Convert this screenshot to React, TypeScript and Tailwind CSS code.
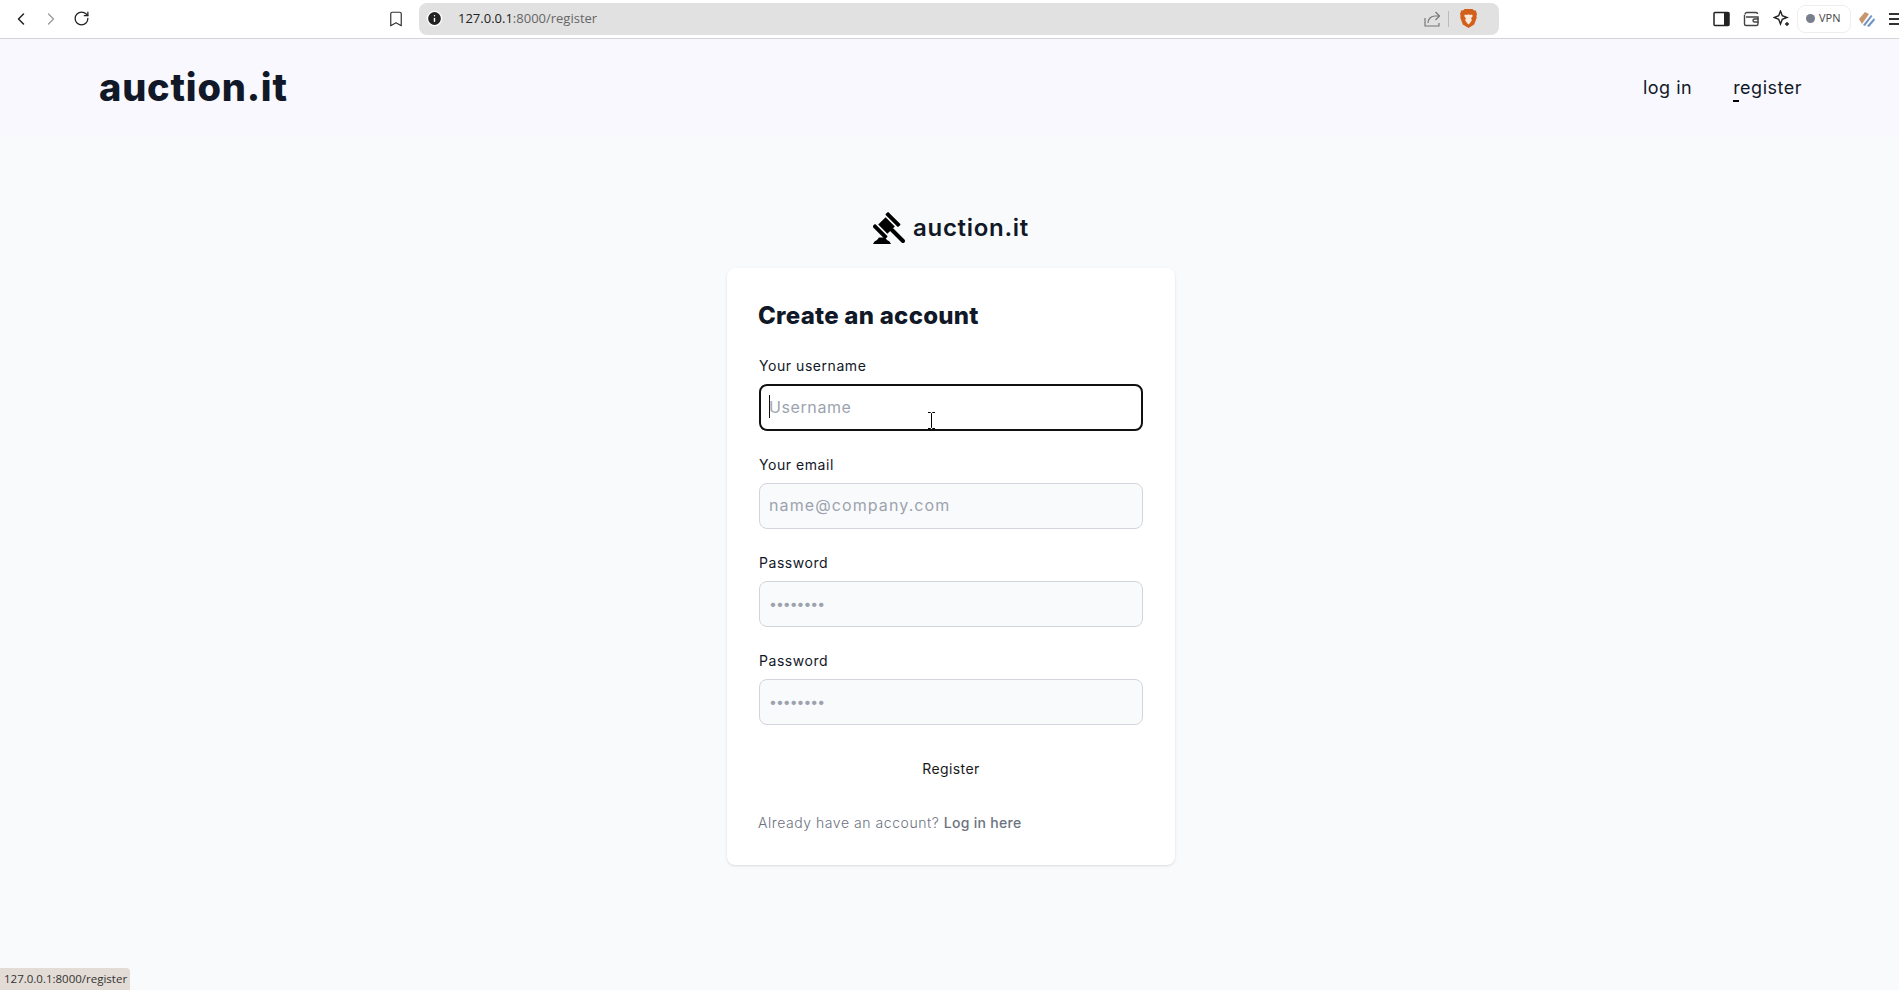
import React from 'react';
import { ChevronLeft, ChevronRight, RotateCw, Bookmark, Info } from 'lucide-react';

const BraveLion = () => (
  <svg width="17" height="19" viewBox="0 0 17 19" className="shrink-0">
    <path d="M4.5 0h8l1.5 1.6 1.6-.3L17 5l-.6 2 .4 1.5-2.6 7L8.5 19l-5.700-3.500L.2 8.500.6 7 0 5l1.400-3.700 1.600.3z" fill="#d2601a" />
    <path d="M5 5.500l2 .5 1.500-.8 1.500.8 2-.5.800 1.500-1.800 2.500 1 1.500-2 3-1.500 1.500-1.500-1.500-2-3 1-1.500L4.200 7z" fill="#f8e8da" />
  </svg>
);

const Gavel = () => (
  <svg width="32" height="32" viewBox="0 0 32 32" className="mr-2 shrink-0">
    <rect x="11" y="5.500" width="18" height="4" rx="1" transform="rotate(45 20 7.500)" fill="#000" />
    <rect x="-2" y="17.500" width="18" height="4" rx="1" transform="rotate(45 7 19.500)" fill="#000" />
    <rect x="7" y="8.250" width="13" height="10.500" transform="rotate(45 13.500 13.500)" fill="#000" />
    <path d="M19 18 L30 29" stroke="#000" strokeWidth="4" strokeLinecap="round" />
    <path d="M0 32 Q1 29 4 28 L6 25.500 H12 L14 28 Q17 29 18 32 Z" fill="#000" />
  </svg>
);

const Field = ({ label, type, placeholder, focused }: { label: string; type: string; placeholder: string; focused?: boolean }) => {
  let inputClass = 'block w-full h-[46px] pl-[9px] pr-2.5 pb-[2px] rounded-lg bg-[#f9fafb] border border-[#d1d5db] text-base tracking-[1.1px] placeholder:text-[#9ca3af] outline-none';
  if (focused) {
    inputClass = 'block w-full h-[47px] pl-[8px] pr-2.5 pb-[2px] rounded-lg bg-white border-2 border-[#111] text-base tracking-[0.6px] placeholder:text-[#9ca3af] outline-none';
  } else if (type === 'password') {
    inputClass = 'block w-full h-[46px] pl-[9px] pr-2.5 pb-[2px] rounded-lg bg-[#f9fafb] border border-[#d1d5db] text-sm tracking-[-1px] placeholder:text-[#9ca3af] outline-none';
  }
  return (
    <div>
      <label className="block mb-2 text-sm tracking-[0.55px] text-[#111827]">{label}</label>
      <div className="relative">
        <input type={type} placeholder={placeholder} readOnly className={inputClass} />
        {focused && <div className="absolute left-[10px] top-[11px] w-px h-[23px] bg-[#111]" />}
      </div>
    </div>
  );
};

const App: React.FC = () => {
  return (
    <div className="relative min-h-screen bg-[#f9fafb] font-['Inter',sans-serif] overflow-hidden">
      {/* Browser toolbar */}
      <div className="flex items-center h-[39px] bg-white border-b border-[#d4d4d4] pb-px overflow-hidden">
        <div className="flex items-center gap-[10px] pl-[11px] w-[387px] shrink-0">
          <ChevronLeft className="w-[20px] h-[20px] text-[#222]" strokeWidth={1.8} />
          <ChevronRight className="w-[20px] h-[20px] text-[#999]" strokeWidth={1.5} />
          <RotateCw className="w-[17px] h-[17px] ml-[2px] text-[#222]" strokeWidth={1.8} />
        </div>
        <Bookmark className="w-[18px] h-[20px] shrink-0 text-[#333]" strokeWidth={1.6} />
        <div className="flex items-center ml-[14px] w-[1080px] shrink-0 h-[32px] rounded-lg bg-[#e1e1e1] pl-[7px] pr-[22px]">
          <Info className="w-[17px] h-[17px] text-white fill-[#222]" strokeWidth={2} />
          <span className="ml-[15px] text-[13px] font-['Open_Sans',sans-serif] text-[#222]">127.0.0.1<span className="text-[#666]">:8000/register</span></span>
          <svg width="17" height="16" viewBox="0 0 17 16" fill="none" stroke="#777" strokeWidth="1.2" className="ml-auto shrink-0">
            <path d="M1 7v8h14v-3" />
            <path d="M4 12c0-4 3-7 7-7h4M11.500 1l4 4-4 4" />
          </svg>
          <div className="w-px h-[16px] bg-[#bbb] ml-[7px] mr-[11px]" />
          <BraveLion />
        </div>
        <div className="flex items-center ml-[214px] shrink-0">
          <svg width="17" height="16" viewBox="0 0 17 16" className="shrink-0">
            <rect x="1" y="1.500" width="15" height="13" rx="1" fill="#fff" stroke="#222" strokeWidth="1.500" />
            <rect x="11" y="1.500" width="5" height="13" fill="#222" />
          </svg>
          <svg width="17" height="16" viewBox="0 0 17 16" fill="none" stroke="#444" strokeWidth="1.400" className="ml-[13px] shrink-0">
            <path d="M2 3.500C2 2 3 1.500 4 1.500h9c1 0 1.500.5 1.500 1.500M1.500 4v9c0 1 .5 1.500 1.500 1.500h10.500c1 0 1.500-.5 1.500-1.500V6H3" />
            <path d="M15.500 8h-4a1.500 1.500 0 0 0 0 3h4" />
          </svg>
          <svg width="17" height="17" viewBox="0 0 17 17" fill="none" stroke="#222" strokeWidth="1.400" className="ml-[13px] shrink-0">
            <path d="M7.500 1l1.800 4.700L14 7.500l-4.700 1.800L7.500 14 5.700 9.300 1 7.500l4.700-1.800z" />
            <path d="M14 12v4M12 14h4" />
          </svg>
          <div className="ml-[7px] flex items-center w-[54px] h-[28px] shrink-0 rounded-lg border border-[#eee] pl-[8px]">
            <span className="w-[9px] h-[9px] rounded-full bg-[#777f8c]" />
            <span className="ml-[4px] text-[11px] font-['Open_Sans',sans-serif] text-[#444]">VPN</span>
          </div>
          <svg width="16" height="16" viewBox="0 0 16 16" className="ml-[8px] shrink-0">
            <path d="M0 8 L6 1 L10 3 L3 13Z" fill="#c9966b" />
            <path d="M4 14 L12 4 L13.500 5 L6 15Z" fill="#6f94c4" />
            <path d="M8 15 L15 7 L16 9 L10 16Z" fill="#6f94c4" />
          </svg>
          <div className="ml-[14px] flex flex-col gap-[3px] w-[16px] shrink-0">
            <span className="h-[2px] bg-[#333]" />
            <span className="h-[2px] bg-[#333]" />
            <span className="h-[2px] bg-[#333]" />
          </div>
        </div>
      </div>

      {/* Site header */}
      <header className="flex items-center justify-between h-[97px] pl-[99px] pr-[97px] bg-[#f8f8fe]">
        <a className="text-[38px] font-extrabold tracking-[0.8px] text-[#111827]">auction.it</a>
        <nav className="flex items-center gap-[41px] text-lg tracking-[0.5px] text-[#111827]">
          <a>log in</a>
          <a className="relative">
            register
            <span className="absolute left-0 top-[26px] w-[6px] h-[2px] bg-black" />
          </a>
        </nav>
      </header>

      {/* Register form */}
      <main className="flex flex-col items-center pt-[76px] pl-[3px]">
        <div className="flex items-center mb-6 text-2xl font-semibold tracking-[0.7px] text-[#111827]">
          <Gavel />
          auction.it
        </div>
        <div className="w-[448px] p-8 bg-white rounded-lg shadow">
          <h1 className="text-2xl font-extrabold tracking-[0.25px] -ml-px text-[#111827] mb-6">Create an account</h1>
          <form className="flex flex-col gap-6">
            <Field label="Your username" type="text" placeholder="Username" focused />
            <Field label="Your email" type="email" placeholder="name@company.com" />
            <Field label="Password" type="password" placeholder="••••••••" />
            <Field label="Password" type="password" placeholder="••••••••" />
            <button type="button" className="h-10 text-sm tracking-[0.4px] text-[#1a1a1a]">Register</button>
            <p className="-ml-px text-sm font-light tracking-[0.55px] text-[#6b7280]">
              Already have an account? <a className="font-medium tracking-[0.3px]">Log in here</a>
            </p>
          </form>
        </div>
      </main>

      {/* Mouse cursor over the focused input */}
      <svg width="9" height="17" viewBox="0 0 9 17" className="absolute left-[927px] top-[412px]">
        <path d="M1 .5h2.500L4.500 1.500 5.500.5H8M4.500 1.500v14M1 16.500h2.500l1-1 1 1H8" fill="none" stroke="#000" strokeWidth="1" />
      </svg>

      {/* Browser status bubble */}
      <div className="absolute left-0 bottom-0 flex items-center w-[130px] h-[22px] pl-[4px] bg-[#e3dcd6] rounded-tr-[4px] text-[11.5px] font-['Open_Sans',sans-serif] text-[#333]">
        127.0.0.1:8000/register
      </div>
    </div>
  );
};

export default App;
